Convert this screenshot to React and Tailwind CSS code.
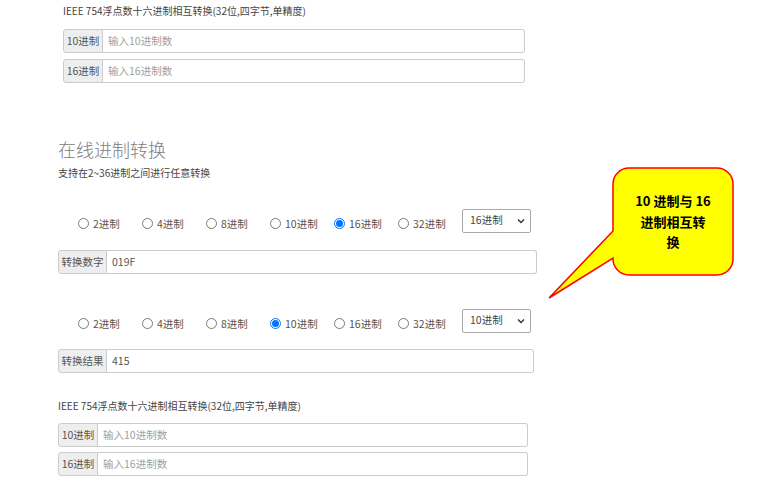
import React from "react";

const F = { fontFamily: '"Noto Sans CJK SC", "Noto Sans", sans-serif' };

function Group({ label, placeholder, value, labelW, inputEnd }) {
  return (
    <div className="flex h-[24px]" style={{ width: inputEnd }}>
      <div
        className="flex items-center justify-center bg-[#eeeeee] border border-[#cccccc] rounded-l-[3px] text-[10.5px] text-[#555]"
        style={{ width: labelW }}
      >
        {label}
      </div>
      <div className="flex-1 flex items-center border border-l-0 border-[#cccccc] rounded-r-[3px] pl-[5px] text-[10.5px] bg-white">
        {value ? (
          <span className="text-[#555]">{value}</span>
        ) : (
          <span className="text-[#a0a0a0]">{placeholder}</span>
        )}
      </div>
    </div>
  );
}

function Radio({ label, checked }) {
  return (
    <div className="w-[64px] flex items-center gap-[4px] pt-[5px]">
      {checked ? (
        <span className="w-[11px] h-[11px] rounded-full border border-[#0075ff] flex items-center justify-center bg-white">
          <span className="w-[7px] h-[7px] rounded-full bg-[#0075ff]" />
        </span>
      ) : (
        <span className="w-[11px] h-[11px] rounded-full border border-[#7a7a7a] bg-white" />
      )}
      <span className="text-[10.5px] text-[#555]">{label}</span>
    </div>
  );
}

function RadioRow({ sel }) {
  const items = ["2进制", "4进制", "8进制", "10进制", "16进制", "32进制"];
  return (
    <div className="flex h-[24px] pl-[20px] items-center">
      {items.map((t) => (
        <Radio key={t} label={t} checked={t === sel} />
      ))}
      <div className="w-[69px] h-[24px] border border-[#a9a9a9] rounded-[2px] flex items-center justify-between pl-[7px] pr-[5px] bg-white">
        <span className="text-[10.5px] text-[#444] -mt-[2px]">{sel}</span>
        <svg width="8" height="6" viewBox="0 0 8 6">
          <path d="M1 1.5 L4 4.5 L7 1.5" fill="none" stroke="#333" strokeWidth="1.4" />
        </svg>
      </div>
    </div>
  );
}

export default function App() {
  return (
    <div className="relative w-[778px] h-[486px] bg-white overflow-hidden text-[#333]" style={F}>
      <div className="pl-[63px]">
        <div className="h-[22px] leading-[22px] text-[10px] text-[#444]">
          IEEE 754浮点数十六进制相互转换(32位,四字节,单精度)
        </div>
        <div className="mt-[7px]">
          <Group label="10进制" placeholder="输入10进制数" labelW={40} inputEnd={462} />
        </div>
        <div className="mt-[6px]">
          <Group label="16进制" placeholder="输入16进制数" labelW={40} inputEnd={462} />
        </div>
      </div>

      <div className="pl-[58px]">
        <div className="mt-[56px] h-[20px] leading-[20px] text-[18px] font-light text-[#808080]">在线进制转换</div>
        <div className="mt-[7px] h-[14px] leading-[14px] text-[10px] text-[#444]">支持在2~36进制之间进行任意转换</div>

        <div className="mt-[29px]">
          <RadioRow sel="16进制" />
        </div>
        <div className="mt-[17px]">
          <Group label="转换数字" value="019F" labelW={49} inputEnd={479} />
        </div>

        <div className="mt-[35px]">
          <RadioRow sel="10进制" />
        </div>
        <div className="mt-[16px]">
          <Group label="转换结果" value="415" labelW={49} inputEnd={476} />
        </div>

        <div className="mt-[22px] h-[22px] leading-[22px] text-[10px] text-[#444]">
          IEEE 754浮点数十六进制相互转换(32位,四字节,单精度)
        </div>
        <div className="mt-[6px]">
          <Group label="10进制" placeholder="输入10进制数" labelW={40} inputEnd={470} />
        </div>
        <div className="mt-[5px]">
          <Group label="16进制" placeholder="输入16进制数" labelW={40} inputEnd={470} />
        </div>
      </div>

      {/* callout */}
      <svg className="absolute left-[540px] top-[160px]" width="200" height="150" viewBox="0 0 200 150">
        <path
          d="M 89 8 H 177 A 16 16 0 0 1 193 24 V 99 A 16 16 0 0 1 177 115 H 89 A 16 16 0 0 1 73 99 V 98 L 9 138 L 73 71 V 24 A 16 16 0 0 1 89 8 Z"
          fill="#ffff00"
          stroke="#ff0000"
          strokeWidth="1.5"
          strokeLinejoin="miter"
        />
      </svg>
      <div className="absolute left-[613px] top-[168px] w-[120px] pt-[23px] text-center text-[13px] leading-[20.5px] font-bold text-black">
        10 进制与 16
        <br />
        进制相互转
        <br />
        换
      </div>
    </div>
  );
}
